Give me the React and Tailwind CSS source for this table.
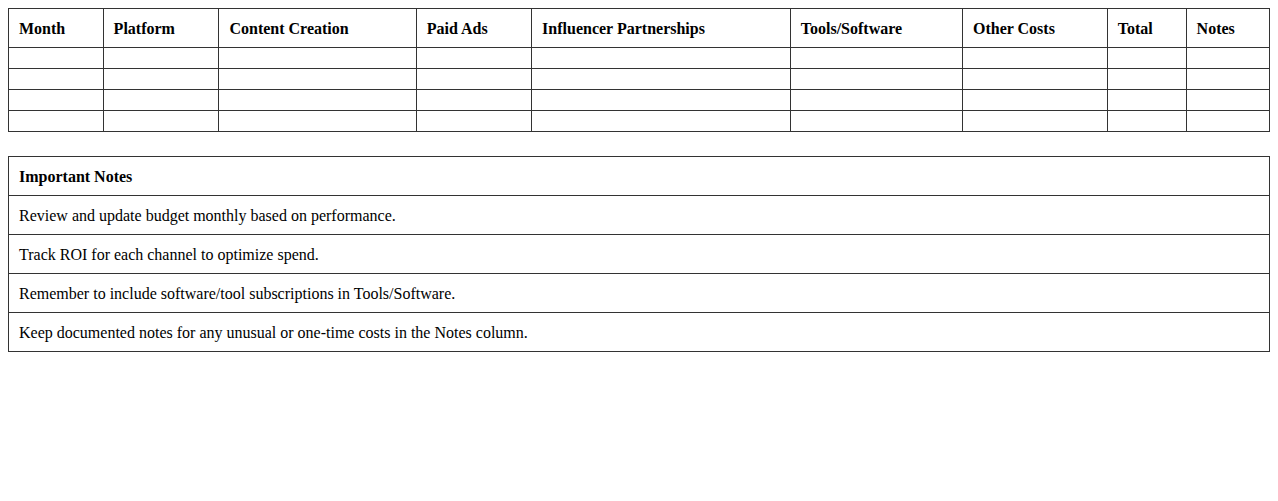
const headers = [
  "Month",
  "Platform",
  "Content Creation",
  "Paid Ads",
  "Influencer Partnerships",
  "Tools/Software",
  "Other Costs",
  "Total",
  "Notes",
];

const notes = [
  "Review and update budget monthly based on performance.",
  "Track ROI for each channel to optimize spend.",
  "Remember to include software/tool subscriptions in Tools/Software.",
  "Keep documented notes for any unusual or one-time costs in the Notes column.",
];

const App = () => {
  return (
    <div className="min-h-screen bg-white p-2 font-['Liberation_Serif','Times_New_Roman',serif] text-base leading-[normal] text-black">
      {/* Budget table */}
      <table className="w-full border-collapse">
        <thead>
          <tr>
            {headers.map((h) => (
              <th
                key={h}
                className="border border-[#333] px-[10px] pt-[11px] pb-[9px] text-left font-bold"
              >
                {h}
              </th>
            ))}
          </tr>
        </thead>
        <tbody>
          {[0, 1, 2, 3].map((r) => (
            <tr key={r}>
              {headers.map((h) => (
                <td key={h} className="border border-[#333] p-[10px]"></td>
              ))}
            </tr>
          ))}
        </tbody>
      </table>

      {/* Notes table */}
      <table className="mt-6 w-full border-collapse">
        <thead>
          <tr>
            <th className="border border-[#333] px-[10px] pt-[11px] pb-[9px] text-left font-bold">
              Important Notes
            </th>
          </tr>
        </thead>
        <tbody>
          {notes.map((n) => (
            <tr key={n}>
              <td className="border border-[#333] px-[10px] pt-[11px] pb-[9px]">{n}</td>
            </tr>
          ))}
        </tbody>
      </table>
    </div>
  );
};

export default App;
